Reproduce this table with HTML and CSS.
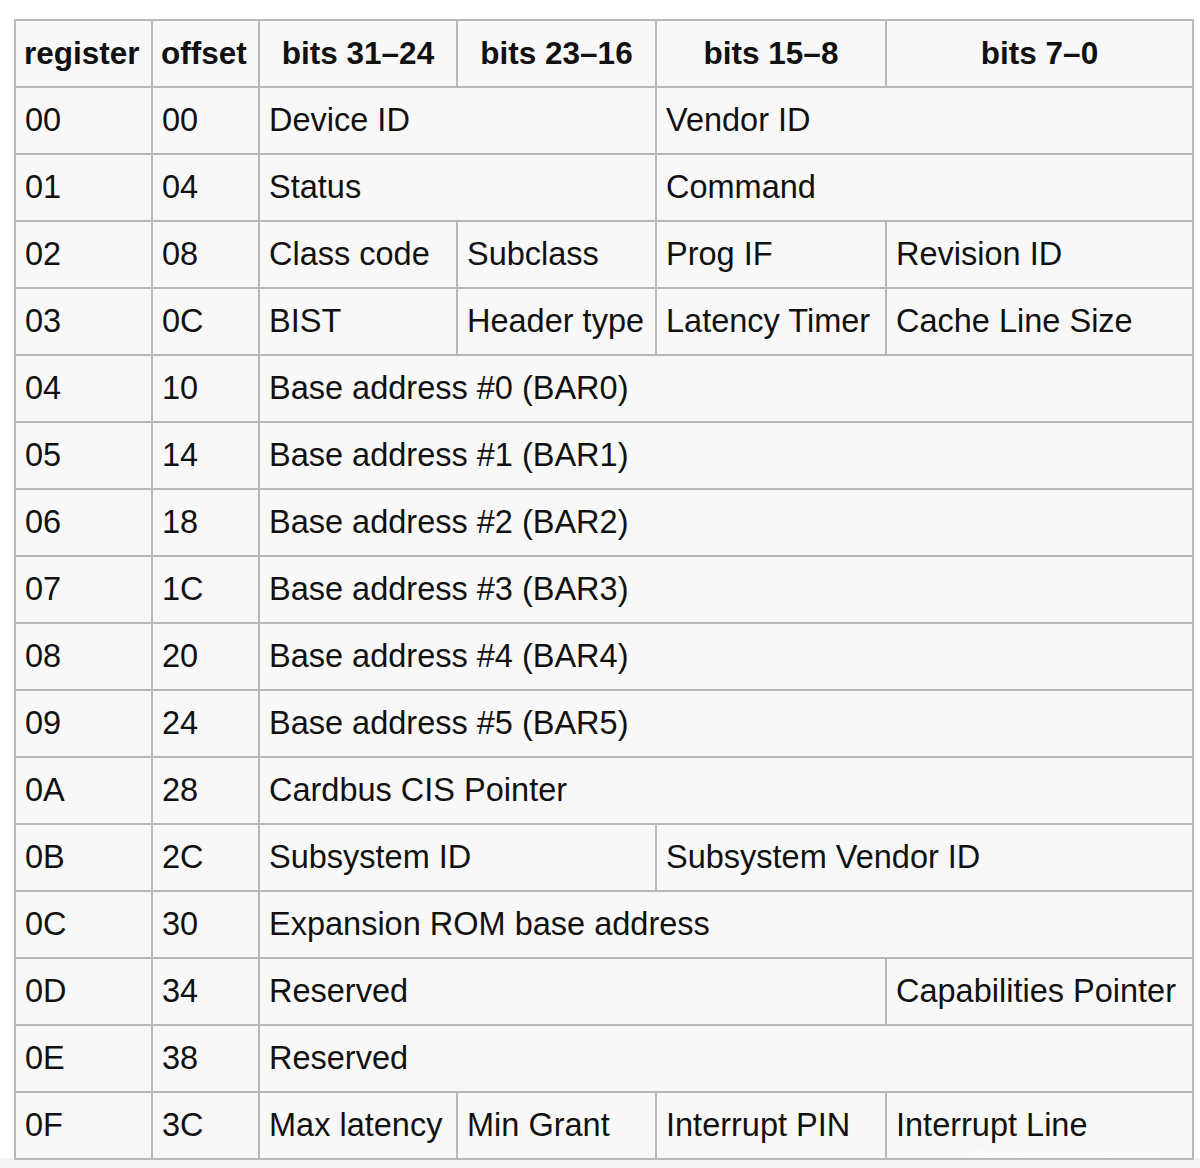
FILE: index.html
```html
<!DOCTYPE html>
<html>
<head>
<meta charset="utf-8">
<link rel="stylesheet" href="styles.css">
</head>
<body>
<div class="page">
<table class="regs">
<colgroup>
<col class="c1"><col class="c2"><col class="c3"><col class="c4"><col class="c5"><col class="c6">
</colgroup>
<thead>
<tr><th>register</th><th>offset</th><th>bits 31–24</th><th>bits 23–16</th><th>bits 15–8</th><th>bits 7–0</th></tr>
</thead>
<tbody>
<tr><td>00</td><td>00</td><td colspan="2">Device ID</td><td colspan="2">Vendor ID</td></tr>
<tr><td>01</td><td>04</td><td colspan="2">Status</td><td colspan="2">Command</td></tr>
<tr><td>02</td><td>08</td><td>Class code</td><td>Subclass</td><td>Prog IF</td><td>Revision ID</td></tr>
<tr><td>03</td><td>0C</td><td>BIST</td><td>Header type</td><td>Latency Timer</td><td>Cache Line Size</td></tr>
<tr><td>04</td><td>10</td><td colspan="4">Base address #0 (BAR0)</td></tr>
<tr><td>05</td><td>14</td><td colspan="4">Base address #1 (BAR1)</td></tr>
<tr><td>06</td><td>18</td><td colspan="4">Base address #2 (BAR2)</td></tr>
<tr><td>07</td><td>1C</td><td colspan="4">Base address #3 (BAR3)</td></tr>
<tr><td>08</td><td>20</td><td colspan="4">Base address #4 (BAR4)</td></tr>
<tr><td>09</td><td>24</td><td colspan="4">Base address #5 (BAR5)</td></tr>
<tr><td>0A</td><td>28</td><td colspan="4">Cardbus CIS Pointer</td></tr>
<tr><td>0B</td><td>2C</td><td colspan="2">Subsystem ID</td><td colspan="2">Subsystem Vendor ID</td></tr>
<tr><td>0C</td><td>30</td><td colspan="4">Expansion ROM base address</td></tr>
<tr><td>0D</td><td>34</td><td colspan="3">Reserved</td><td>Capabilities Pointer</td></tr>
<tr><td>0E</td><td>38</td><td colspan="4">Reserved</td></tr>
<tr><td>0F</td><td>3C</td><td>Max latency</td><td>Min Grant</td><td>Interrupt PIN</td><td>Interrupt Line</td></tr>
</tbody>
</table>
<div class="watermark">https://blog.csdn.net/weixin_43750090</div>
</div>
</body>
</html>
```

FILE: styles.css
```css
html, body {
  margin: 0;
  padding: 0;
  background: #ffffff;
}
.page {
  position: relative;
  padding: 19px 0 0 14px;
  background: linear-gradient(#ffffff 0, #ffffff 1158px, #f4f4f4 1158px);
  min-height: 1149px;
}
.regs {
  border-collapse: collapse;
  table-layout: fixed;
  width: 1178px;
  font-family: "Liberation Sans", Arial, sans-serif;
  font-size: 32.5px;
  color: #111;
  background: #f8f8f8;
}
.c1 { width: 137px; }
.c2 { width: 107px; }
.c3 { width: 198px; }
.c4 { width: 199px; }
.c5 { width: 230px; }
.c6 { width: 307px; }
.regs th, .regs td {
  border: 2px solid #b8b8b8;
  height: 65px;
  padding: 0 9px;
  white-space: nowrap;
  overflow: hidden;
  vertical-align: middle;
}
.regs th {
  font-weight: bold;
  font-size: 31.5px;
  text-align: center;
}
.regs td {
  text-align: left;
}
.regs thead th:first-child, .regs thead th:nth-child(2) {
  text-align: left;
  padding: 0 8px;
}
.watermark {
  position: absolute;
  left: 970px;
  top: 1146px;
  font-family: "Liberation Sans", Arial, sans-serif;
  font-size: 11px;
  color: rgba(255,255,255,0.7);
}
```
